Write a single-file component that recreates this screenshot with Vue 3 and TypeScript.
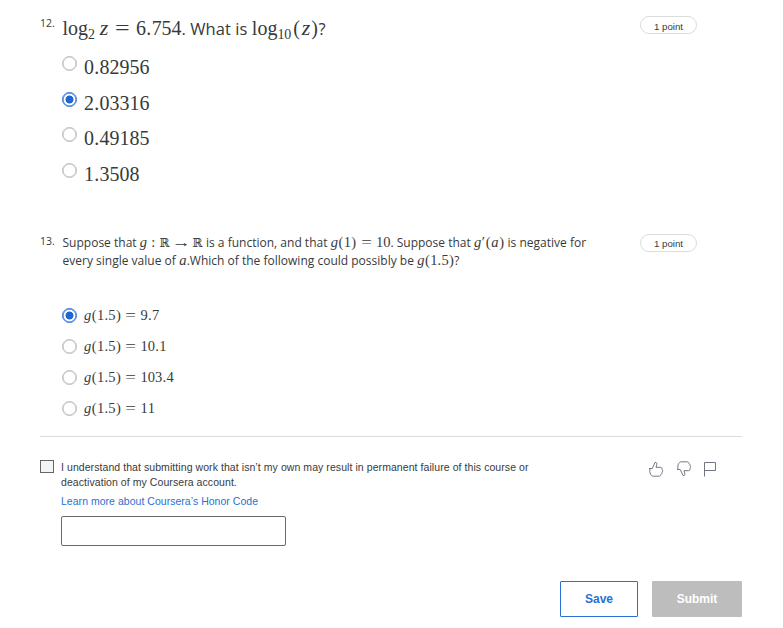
<script setup lang="ts">
import { ref } from 'vue'

interface Segment { text?: string; math?: string }
interface Atom { glyph: string; kind: string }
interface Question {
  id: number
  size: 'large' | 'small'
  prompt: Segment[]
  options: string[]
}

const kinds: Record<string, string> = {
  '.': 'dot', '(': 'paren', ')': 'paren', '=': 'rel', ':': 'colon', '→': 'arrow',
  'ℝ': 'reals', g: 'var-g', z: 'var-z', a: 'var-a', '′': 'prime', ' ': 'thin',
}

/* Splits a formula into glyph boxes: "_" starts a subscript digit, "\" an upright operator letter. */
function atoms(source: string): Atom[] {
  const out: Atom[] = []
  const chars = Array.from(source)
  for (let i = 0; i < chars.length; i++) {
    if (chars[i] === '_') out.push({ glyph: chars[++i], kind: 'sub' })
    else if (chars[i] === '\\') out.push({ glyph: chars[++i], kind: 'op' })
    else out.push({ glyph: chars[i], kind: kinds[chars[i]] ?? 'digit' })
  }
  return out
}

const questions: Question[] = [
  {
    id: 12,
    size: 'large',
    prompt: [
      { math: '\\l\\o\\g_2 z=6.754' },
      { text: '. What is ' },
      { math: '\\l\\o\\g_1_0(z)' },
      { text: '?' },
    ],
    options: ['0.82956', '2.03316', '0.49185', '1.3508'],
  },
  {
    id: 13,
    size: 'small',
    prompt: [
      { text: 'Suppose that ' },
      { math: 'g:ℝ→ℝ' },
      { text: ' is a function, and that ' },
      { math: 'g(1)=10' },
      { text: '. Suppose that ' },
      { math: 'g′(a)' },
      { text: ' is negative for every single value of ' },
      { math: 'a' },
      { text: '.Which of the following could possibly be ' },
      { math: 'g(1.5)' },
      { text: '?' },
    ],
    options: ['g(1.5)=9.7', 'g(1.5)=10.1', 'g(1.5)=103.4', 'g(1.5)=11'],
  },
]

const answers = ref<Record<number, number>>({ 12: 1, 13: 0 })
const agreed = ref(false)
const fullName = ref('')
</script>

<template>
  <main class="quiz">
    <section v-for="q in questions" :key="q.id" class="question" :class="q.size">
      <div class="number">{{ q.id }}.</div>
      <div class="body">
        <p class="prompt"><template v-for="(s, i) in q.prompt" :key="i"><span v-if="s.math" class="math"><span v-for="(a, j) in atoms(s.math)" :key="j" class="atom" :class="a.kind">{{ a.glyph }}</span></span><template v-else>{{ s.text }}</template></template></p>
        <div class="options">
          <label v-for="(o, i) in q.options" :key="o" class="option">
            <input v-model="answers[q.id]" class="radio" type="radio" :name="'q' + q.id" :value="i" />
            <span class="math"><span v-for="(a, j) in atoms(o)" :key="j" class="atom" :class="a.kind">{{ a.glyph }}</span></span>
          </label>
        </div>
      </div>
      <div class="points">1 point</div>
    </section>

    <footer class="footer">
      <div class="honor">
        <input v-model="agreed" class="check" type="checkbox" />
        <div class="terms">
          <p><span class="line">I understand that submitting work that isn’t my own may result in permanent failure of this course or</span> <span class="line">deactivation of my Coursera account.</span></p>
          <a class="link">Learn more about Coursera’s Honor Code</a>
          <input v-model="fullName" class="name" type="text" />
        </div>
        <div class="feedback">
          <svg width="16" height="16" viewBox="0 0 16 16"><path d="M1.2 7.5H4.2L7.1 1.4C9 1.2 9.2 2.6 8.6 4.2L8 6.3H12.6C14.2 6.5 14.3 8.1 14 8.8C15 9.6 14.8 10.9 14 11.5C14.2 12.6 13.5 13.3 12.8 13.6C12.7 14.6 12 15.2 10.8 15.2H5.3C3.7 15.1 3.2 14.1 2.6 13.3C1.7 11.9 1.8 9.5 1.8 7.5" /></svg>
          <svg width="16" height="16" viewBox="0 0 16 16"><path d="M1.2 8.5H4.2L7.1 14.6C9 14.8 9.2 13.4 8.6 11.8L8 9.7H12.6C14.2 9.5 14.3 7.9 14 7.2C15 6.4 14.8 5.1 14 4.5C14.2 3.4 13.5 2.7 12.8 2.4C12.7 1.4 12 .8 10.8 .8H5.3C3.7 .9 3.2 1.9 2.6 2.7C1.7 4.1 1.8 6.5 1.8 8.5" /></svg>
          <svg class="flag" width="14" height="16" viewBox="0 0 14 16"><path d="M1.5 15.5V1.5H12.5V9.5H1.5" /></svg>
        </div>
      </div>
      <div class="actions">
        <button class="button save" type="button">Save</button>
        <button class="button submit" type="button" disabled>Submit</button>
      </div>
    </footer>
  </main>
</template>

<style>
body {
  background: #fff;
}
</style>

<style scoped>
.quiz {
  box-sizing: border-box;
  width: 783px;
  height: 628px;
  padding: 0 41px 0 40px;
  overflow: hidden;
  color: #373a3c;
  font-family: "Open Sans", "Noto Sans", sans-serif;
}
p {
  margin: 0;
}
.question {
  display: grid;
  grid-template-columns: 22.5px 537.5px auto;
  justify-content: start;
  align-items: start;
  box-sizing: border-box;
}
.large {
  height: 234px;
  padding-top: 16px;
}
.small {
  height: 202px;
}
.number {
  font-size: 10.5px;
  line-height: 15px;
}
.prompt {
  font-size: 12px;
  line-height: 18px;
  letter-spacing: 0.008px;
}
.large .prompt {
  padding-top: 1px;
  font-size: 16.5px;
  line-height: 24px;
  letter-spacing: 0.07px;
}
.points {
  box-sizing: border-box;
  width: 57px;
  height: 18px;
  margin-left: 40px;
  border: 1px solid #dcdcdc;
  border-radius: 9px;
  font: 9.7px/19px "Liberation Sans", Arial, sans-serif;
  text-align: center;
}
.small .points {
  line-height: 17px;
}
.math {
  font-family: "Liberation Serif", serif;
  font-size: 1.21em;
  line-height: 0;
  letter-spacing: 0;
  white-space: nowrap;
}
.atom {
  display: inline-block;
  width: 0.5em;
  line-height: 1;
  text-align: center;
}
.op {
  width: auto;
}
.dot {
  width: 0.278em;
}
.paren {
  width: 0.389em;
}
.sub + .paren {
  margin-left: 0.07em;
}
.rel {
  width: 1.334em;
  transform: scaleX(1.3);
}
.colon {
  width: 0.834em;
}
.arrow {
  width: 1.556em;
  transform: scaleX(1.3);
}
.reals {
  width: 0.86em;
  font-family: "DejaVu Serif", "DejaVu Sans", serif;
  font-size: 0.84em;
}
.var-g {
  width: 0.513em;
  font-style: italic;
}
.var-z {
  width: 0.509em;
  font-style: italic;
  transform: scaleX(1.1);
}
.var-a {
  width: 0.529em;
  font-style: italic;
}
.prime {
  width: 0.28em;
}
.thin {
  width: 0.217em;
}
.sub {
  font-size: 0.7em;
  position: relative;
  top: 0.32em;
}
.large .options {
  padding-top: 8px;
  font-size: 16.5px;
}
.small .options {
  padding-top: 30px;
  font-size: 12px;
}
.option {
  display: flex;
  align-items: center;
  gap: 7px;
  height: 31px;
  margin-left: -0.5px;
}
.option .math {
  line-height: 1;
}
.large .option {
  height: 35.7px;
}
.large .option .radio {
  margin-bottom: 7px;
}
.large .option .math {
  padding-top: 2px;
}
.radio {
  appearance: none;
  box-sizing: border-box;
  width: 15px;
  height: 15px;
  margin: 0;
  border: 1px solid #bdbdbd;
  border-radius: 50%;
  background: #fff;
  box-shadow: inset 0 0 0 0.6px #bdbdbd;
}
.radio:checked {
  border-color: #2a70d4;
  background: radial-gradient(circle, #1f67d2 3.7px, #fff 4.3px);
  box-shadow: inset 0 0 0 0.6px #2a70d4;
}
.footer {
  border-top: 1px solid #dcdcdc;
  font-family: "Liberation Sans", Arial, sans-serif;
}
.honor {
  display: flex;
  align-items: flex-start;
  padding-top: 23px;
}
.check {
  appearance: none;
  box-sizing: border-box;
  width: 14px;
  height: 13px;
  margin: 0 7px 0 0;
  border: 1px solid #666;
  background: #f4f4f4;
}
.terms {
  width: 586.5px;
  font-size: 10.5px;
  line-height: 15px;
}
.line {
  display: block;
  letter-spacing: 0.07px;
}
.link {
  display: block;
  margin-top: 4px;
  color: #2a70d4;
  letter-spacing: 0.03px;
}
.name {
  display: block;
  box-sizing: border-box;
  width: 225px;
  height: 30px;
  margin: 7px 0 0;
  border: 1px solid #6a6a6a;
  border-radius: 2px;
  outline: none;
}
.feedback {
  display: flex;
  gap: 12px;
  padding-top: 1px;
}
.feedback svg {
  fill: none;
  stroke: #626874;
  stroke-width: 0.9;
}
.feedback .flag {
  margin-left: -1px;
}
.actions {
  display: flex;
  justify-content: flex-end;
  gap: 14px;
  padding-top: 35px;
}
.button {
  box-sizing: border-box;
  height: 36px;
  padding: 0;
  border: 1px solid #2a70d4;
  border-radius: 1px;
  font: bold 12px/34px "Liberation Sans", Arial, sans-serif;
}
.save {
  width: 78px;
  background: #fff;
  color: #2a70d4;
}
.submit {
  width: 90px;
  border-color: #bdbdbd;
  background: #bdbdbd;
  color: #fff;
}
</style>
